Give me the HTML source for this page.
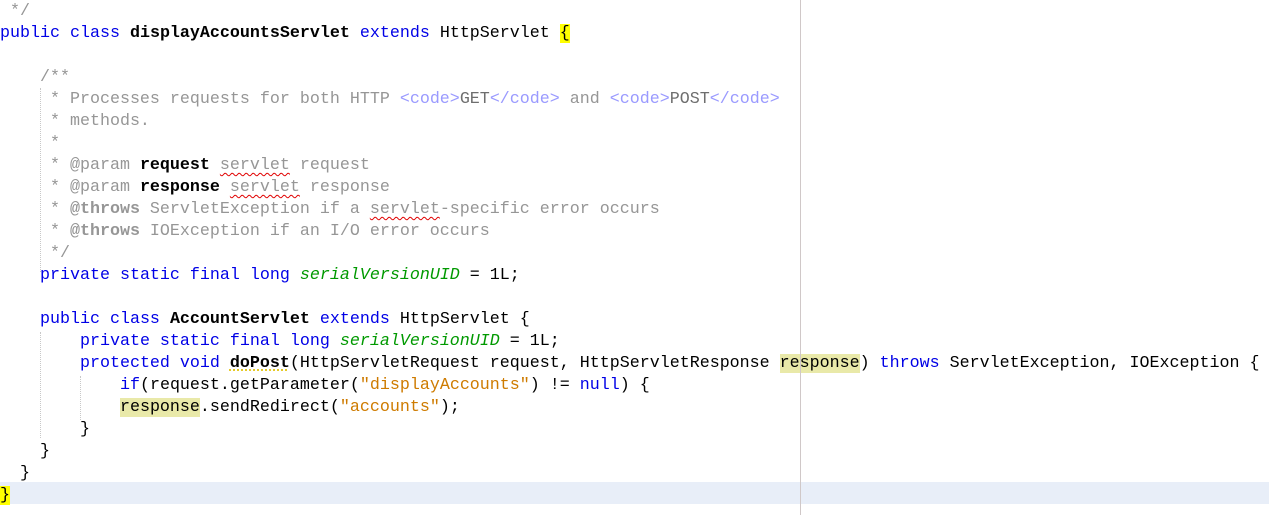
<!DOCTYPE html>
<html><head><meta charset="utf-8"><style>
html,body{margin:0;padding:0;background:#fff;width:1269px;height:515px;overflow:hidden;position:relative}
.code{position:absolute;left:0;top:-2px;width:1269px;font-family:"Liberation Mono",monospace;font-size:16.67px;color:#000}
.l{height:19px;padding-top:3px;line-height:22px;white-space:pre;position:relative;overflow:visible}
.k{color:#0000e6}
.c{color:#969696}
.ct{color:#9a9aff}
.cb{color:#6e6e6e}
.s{color:#ce7b00}
.f{color:#009900;font-style:italic}
b{font-weight:bold}
.cur{background:#e8eef8}
.y{background:#ffff00}
.h{background:#e9e9a9}
.w{text-decoration:underline wavy #e00000;text-decoration-thickness:1px;text-underline-offset:3px}
.dy{text-decoration:underline dotted #e0c000;text-underline-offset:3px}
.margin{position:absolute;left:800px;top:0;width:1px;height:515px;background:#d0c8c8}
.g{position:absolute;width:0;border-left:1px dotted #c8c8c8}
</style></head><body>
<div class="code">
<div class="l"><span class="c"> */</span></div>
<div class="l"><span class="k">public class</span> <b>displayAccountsServlet</b> <span class="k">extends</span> HttpServlet <span class="y">{</span></div>
<div class="l"> </div>
<div class="l">    <span class="c">/**</span></div>
<div class="l"><span class="c">     * Processes requests for both HTTP </span><span class="ct">&lt;code&gt;</span><span class="cb">GET</span><span class="ct">&lt;/code&gt;</span><span class="c"> and </span><span class="ct">&lt;code&gt;</span><span class="cb">POST</span><span class="ct">&lt;/code&gt;</span></div>
<div class="l"><span class="c">     * methods.</span></div>
<div class="l"><span class="c">     *</span></div>
<div class="l"><span class="c">     * @param </span><b>request</b><span class="c"> <span class="w">servlet</span> request</span></div>
<div class="l"><span class="c">     * @param </span><b>response</b><span class="c"> <span class="w">servlet</span> response</span></div>
<div class="l"><span class="c">     * <b>@throws</b> ServletException if a <span class="w">servlet</span>-specific error occurs</span></div>
<div class="l"><span class="c">     * <b>@throws</b> IOException if an I/O error occurs</span></div>
<div class="l"><span class="c">     */</span></div>
<div class="l">    <span class="k">private static final long</span> <span class="f">serialVersionUID</span> = 1L;</div>
<div class="l"> </div>
<div class="l">    <span class="k">public class</span> <b>AccountServlet</b> <span class="k">extends</span> HttpServlet {</div>
<div class="l">        <span class="k">private static final long</span> <span class="f">serialVersionUID</span> = 1L;</div>
<div class="l">        <span class="k">protected void</span> <b class="dy">doPost</b>(HttpServletRequest request, HttpServletResponse <span class="h">response</span>) <span class="k">throws</span> ServletException, IOException {</div>
<div class="l">            <span class="k">if</span>(request.getParameter(<span class="s">"displayAccounts"</span>) != <span class="k">null</span>) {</div>
<div class="l">            <span class="h">response</span>.sendRedirect(<span class="s">"accounts"</span>);</div>
<div class="l">        }</div>
<div class="l">    }</div>
<div class="l">  }</div>
<div class="l cur"><span class="y">}</span></div>
</div>
<div class="g" style="left:40px;top:88px;height:184px"></div>
<div class="g" style="left:40px;top:332px;height:106px"></div>
<div class="g" style="left:80px;top:376px;height:44px"></div>
<div class="margin"></div>
</body></html>
